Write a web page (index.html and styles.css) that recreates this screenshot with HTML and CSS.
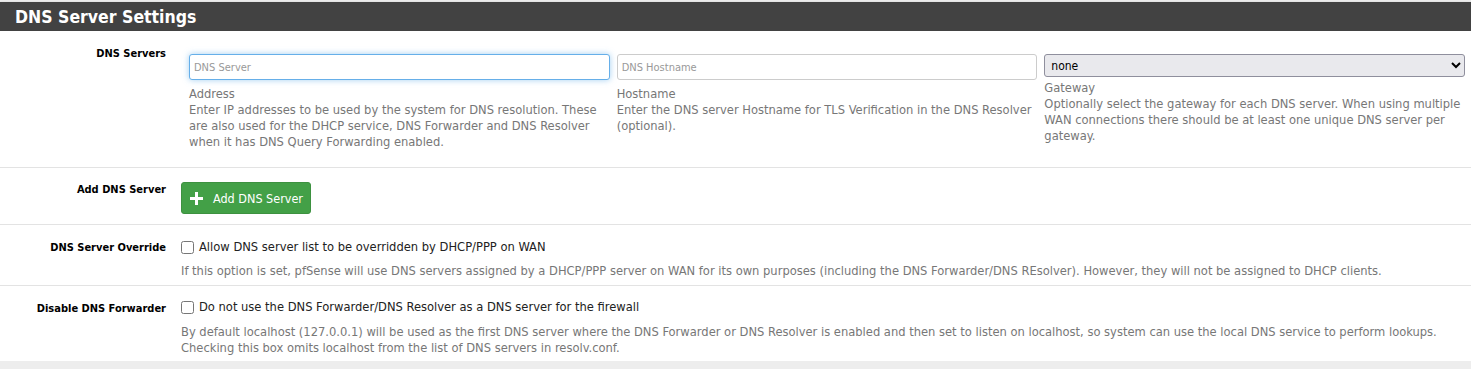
FILE: index.html
```html
<!DOCTYPE html>
<html lang="en">
<head>
    <meta charset="UTF-8">
    <meta name="viewport" content="width=device-width, initial-scale=1.0">
    <title>DNS Server Settings</title>
    <link rel="stylesheet" href="styles.css">
</head>
<body>

    <div class="panel">
        <div class="panel-heading">
            <h2 class="panel-title">DNS Server Settings</h2>
        </div>

        <div class="panel-body">

            <!-- DNS servers -->
            <div class="form-row row-servers">
                <span class="form-label">DNS Servers</span>
                <div class="server-cols">
                    <div class="col">
                        <input type="text" class="field focused" placeholder="DNS Server">
                        <p class="help"><span class="help-title">Address</span>Enter IP addresses to be used by the system for DNS resolution. These are also used for the DHCP service, DNS Forwarder and DNS Resolver when it has DNS Query Forwarding enabled.</p>
                    </div>
                    <div class="col">
                        <input type="text" class="field" placeholder="DNS Hostname">
                        <p class="help"><span class="help-title">Hostname</span>Enter the DNS server Hostname for TLS Verification in the DNS Resolver (optional).</p>
                    </div>
                    <div class="col">
                        <select class="field select">
                            <option>none</option>
                        </select>
                        <p class="help narrow"><span class="help-title">Gateway</span>Optionally select the gateway for each DNS server. When using multiple WAN connections there should be at least one unique DNS server per gateway.</p>
                    </div>
                </div>
            </div>

            <!-- add button -->
            <div class="form-row row-add">
                <span class="form-label">Add DNS Server</span>
                <div>
                    <button class="btn-add">
                        <svg width="13" height="13" viewBox="0 0 13 13"><path d="M5 0h3v5h5v3H8v5H5V8H0V5h5z" fill="#fff"/></svg>
                        Add DNS Server
                    </button>
                </div>
            </div>

            <!-- override -->
            <div class="form-row row-check">
                <span class="form-label">DNS Server Override</span>
                <div>
                    <label class="check"><input type="checkbox"> Allow DNS server list to be overridden by DHCP/PPP on WAN</label>
                    <p class="help">If this option is set, pfSense will use DNS servers assigned by a DHCP/PPP server on WAN for its own purposes (including the DNS Forwarder/DNS REsolver). However, they will not be assigned to DHCP clients.</p>
                </div>
            </div>

            <!-- forwarder -->
            <div class="form-row row-check last">
                <span class="form-label">Disable DNS Forwarder</span>
                <div>
                    <label class="check"><input type="checkbox"> Do not use the DNS Forwarder/DNS Resolver as a DNS server for the firewall</label>
                    <p class="help">By default localhost (127.0.0.1) will be used as the first DNS server where the DNS Forwarder or DNS Resolver is enabled and then set to listen on localhost, so system can use the local DNS service to perform lookups.<br>Checking this box omits localhost from the list of DNS servers in resolv.conf.</p>
                </div>
            </div>

        </div>
    </div>

</body>
</html>
```

FILE: styles.css
```css
*,*::before,*::after {
    box-sizing: border-box;
    margin: 0;
    padding: 0;
}

body {
    background-color: #ededed;
    font-family: 'DejaVu Sans Condensed', 'DejaVu Sans', sans-serif;
    font-size: 12.8px;
    color: #222;
    padding-top: 2px;
}

.panel {
    background-color: #fff;
    box-shadow: 0 1px 3px rgba(0, 0, 0, 0.2);
}

.panel-heading {
    background-color: #424242;
    height: 29px;
    padding: 0 15px;
    display: flex;
    align-items: center;
}

.panel-title {
    color: #fff;
    font-size: 17.5px;
    font-weight: bold;
}

/* rows */
.form-row {
    display: grid;
    grid-template-columns: 166px 1fr;
    column-gap: 15px;
    border-top: 1px solid #e3e3e3;
    padding-top: 14px;
}

.panel-body .form-row:first-child {
    border-top: none;
}

.form-label {
    text-align: right;
    font-weight: bold;
    color: #000;
    font-size: 11px;
    line-height: 14px;
    padding-top: 1px;
}

.row-servers {
    padding-top: 13px;
    padding-bottom: 17px;
}

.row-servers .form-label {
    padding-top: 3px;
}

.row-add {
    padding-bottom: 10px;
}

.row-check {
    padding-bottom: 6px;
    padding-top: 15px;
}

.row-check.last {
    padding-top: 14px;
    padding-bottom: 5px;
}

.row-check.last .form-label {
    padding-top: 2px;
}

/* DNS servers columns */
.server-cols {
    display: grid;
    grid-template-columns: 1fr 1fr 1fr;
    column-gap: 7px;
    padding: 10px 6px 0 8px;
}

.field {
    display: block;
    width: 100%;
    height: 26px;
    border: 1px solid #ccc;
    border-radius: 3px;
    padding: 0 4px;
    font-family: inherit;
    font-size: 11px;
    color: #222;
    background-color: #fff;
    outline: none;
}

.field::placeholder {
    color: #999;
}

.field.focused {
    border-color: #66afe9;
    box-shadow: 0 0 6px rgba(102, 175, 233, 0.6);
}

.select {
    background-color: #e9e9ed;
    border-color: #8f8f9d;
    font-size: 12px;
    color: #000;
    padding: 0 2px;
    height: 23px;
}

.help {
    color: #777;
    line-height: 16px;
    margin-top: 6px;
}

.help-title {
    display: block;
}

.help.narrow {
    margin-top: 3px;
}

/* button */
.btn-add {
    display: inline-flex;
    align-items: center;
    gap: 10px;
    height: 32px;
    padding: 0 7px 0 8px;
    background-color: #43a047;
    border: 1px solid #3d9140;
    border-radius: 3px;
    color: #fff;
    font-family: inherit;
    font-size: 12.5px;
    cursor: pointer;
}

/* checkbox rows */
.check {
    display: flex;
    align-items: center;
    gap: 5px;
    line-height: 14px;
    color: #222;
}

.check input {
    width: 13px;
    height: 13px;
    margin: 0;
}

.row-check .help {
    margin-top: 9px;
}

.row-check.last .help {
    margin-top: 10px;
}
```
